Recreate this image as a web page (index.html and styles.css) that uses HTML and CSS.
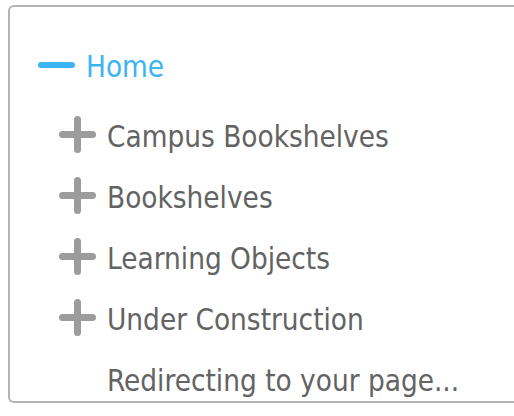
FILE: index.html
```html
<!DOCTYPE html>
<html>
<head>
<meta charset="utf-8">
<link rel="stylesheet" href="styles.css">
</head>
<body>
<div class="panel">
  <ul class="tree">
    <li class="node open">
      <div class="row">
        <span class="minus"></span>
        <span class="label home">Home</span>
      </div>
      <ul class="children">
        <li class="row">
          <svg class="plus" viewBox="0 0 37 37" width="37" height="37"><path d="M3.5 18.5H33.5M18.5 3.5V33.5"/></svg>
          <span class="label">Campus Bookshelves</span>
        </li>
        <li class="row">
          <svg class="plus" viewBox="0 0 37 37" width="37" height="37"><path d="M3.5 18.5H33.5M18.5 3.5V33.5"/></svg>
          <span class="label">Bookshelves</span>
        </li>
        <li class="row">
          <svg class="plus" viewBox="0 0 37 37" width="37" height="37"><path d="M3.5 18.5H33.5M18.5 3.5V33.5"/></svg>
          <span class="label">Learning Objects</span>
        </li>
        <li class="row">
          <svg class="plus" viewBox="0 0 37 37" width="37" height="37"><path d="M3.5 18.5H33.5M18.5 3.5V33.5"/></svg>
          <span class="label">Under Construction</span>
        </li>
        <li class="row">
          <span class="spacer"></span>
          <span class="label">Redirecting to your page...</span>
        </li>
      </ul>
    </li>
  </ul>
</div>
</body>
</html>
```
FILE: styles.css
```css
html, body {
  margin: 0;
  padding: 0;
  background: #ffffff;
}
body {
  padding: 5px 0 0 8px;
  font-family: "DejaVu Sans Condensed", "DejaVu Sans", sans-serif;
  font-size: 29.4px;
  color: #636363;
  overflow: hidden;
}
.panel {
  width: 506px;
  height: 398px;
  box-sizing: border-box;
  border: 2px solid #b3b3b3;
  border-right: none;
  border-radius: 6px 0 0 6px;
  padding: 30px 0 0 28px;
  overflow: hidden;
}
.tree, .children {
  list-style: none;
  margin: 0;
  padding: 0;
}
.children {
  padding-left: 21px;
  margin-top: 9px;
}
.row {
  display: flex;
  align-items: center;
  height: 61px;
  line-height: 61px;
  white-space: nowrap;
}
.label {
  margin-left: 11px;
}
.home {
  color: #3bb4f1;
}
.minus {
  display: block;
  width: 37px;
  height: 6px;
  border-radius: 3px;
  background: #3bb4f1;
  margin-bottom: 6px;
}
.plus {
  display: block;
  flex: none;
  margin-bottom: 7px;
}
.plus path {
  stroke: #9c9c9c;
  stroke-width: 7;
  stroke-linecap: round;
  fill: none;
}
.spacer {
  display: block;
  width: 37px;
  flex: none;
}
```
